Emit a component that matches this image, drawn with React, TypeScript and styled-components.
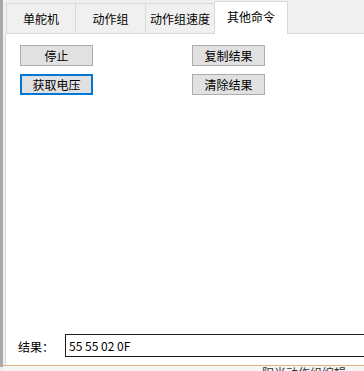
import styled, { createGlobalStyle } from "styled-components";

const GlobalStyle = createGlobalStyle`
  html, body {
    margin: 0;
    padding: 0;
    background: #f0f0f0;
  }
  body {
    font-family: "Noto Sans CJK SC", "Noto Sans", sans-serif;
    font-size: 12px;
    color: #000;
  }
`;

const tabs = [
  { name: "单舵机", width: 70 },
  { name: "动作组", width: 71 },
  { name: "动作组速度", width: 70 },
  { name: "其他命令", width: 74 },
];
const selectedTab = 3;

const App = () => {
  return (
    <>
      <GlobalStyle />
      <Page>
        <Edge />
        <Window>
          <TabBar>
            {tabs.map((t, i) => (
              <Tab
                key={t.name}
                $width={t.width}
                $active={i === selectedTab}
                $first={i === 0}
              >
                {t.name}
              </Tab>
            ))}
          </TabBar>
          <Panel>
            <ButtonGrid>
              <CmdButton>停止</CmdButton>
              <CmdButton>复制结果</CmdButton>
              <CmdButton $focused>获取电压</CmdButton>
              <CmdButton>清除结果</CmdButton>
            </ButtonGrid>
            <ResultRow>
              <ResultLabel>结果：</ResultLabel>
              <ResultBox readOnly value="55 55 02 0F" />
            </ResultRow>
          </Panel>
          <FrameLine />
          <BehindWindow>阳光动作组编辑</BehindWindow>
        </Window>
      </Page>
    </>
  );
};

export default App;

// styled-components
const Page = styled.div`
  display: flex;
  width: 364px;
  height: 371px;
  overflow: hidden;
`;

const Edge = styled.div`
  width: 3px;
  flex-shrink: 0;
  background: #a9a9a9;
  margin-bottom: 4px;
`;

const Window = styled.div`
  flex: 1;
  display: flex;
  flex-direction: column;
  min-width: 0;
  overflow: hidden;
`;

const TabBar = styled.div`
  height: 33px;
  display: flex;
  align-items: flex-end;
  padding-left: 3px;
  flex-shrink: 0;
`;

const Tab = styled.div<{ $width: number; $active?: boolean; $first?: boolean }>`
  box-sizing: border-box;
  display: flex;
  align-items: center;
  justify-content: center;
  width: ${(p) => p.$width}px;
  height: ${(p) => (p.$active ? "33px" : "30px")};
  margin-left: ${(p) => (p.$first ? "0" : "-1px")};
  margin-bottom: ${(p) => (p.$active ? "-1px" : "0")};
  padding-bottom: ${(p) => (p.$active ? "3px" : "0")};
  border: 1px solid #d9d9d9;
  border-bottom: none;
  background: ${(p) => (p.$active ? "#fff" : "#f0f0f0")};
  position: relative;
  z-index: ${(p) => (p.$active ? 1 : 0)};
  font-size: 12px;
  line-height: 1;
  white-space: nowrap;
`;

const Panel = styled.div`
  flex: 1;
  display: flex;
  flex-direction: column;
  background: #fff;
  border-top: 1px solid #d9d9d9;
  border-left: 1px solid #d9d9d9;
  margin-left: 2px;
  padding: 11px 0 8px 0;
`;

const ButtonGrid = styled.div`
  display: grid;
  grid-template-columns: 73px 73px;
  column-gap: 99px;
  row-gap: 8px;
  padding-left: 14px;
`;

const CmdButton = styled.button<{ $focused?: boolean }>`
  box-sizing: border-box;
  width: 73px;
  height: 21px;
  padding: 0;
  background: #e1e1e1;
  border: ${(p) => (p.$focused ? "2px solid #0078d7" : "1px solid #adadad")};
  font-family: "Noto Sans CJK SC", sans-serif;
  font-size: 12px;
  line-height: 1;
  color: #000;
`;

const ResultRow = styled.div`
  margin-top: auto;
  display: flex;
  align-items: center;
  padding-left: 12px;
`;

const ResultLabel = styled.span`
  width: 47px;
  font-size: 12px;
  margin-top: 1px;
`;

const ResultBox = styled.input`
  box-sizing: border-box;
  flex: 1;
  margin-right: -20px;
  height: 23px;
  padding: 0 0 0 3px;
  border: 1px solid #1c1c1c;
  background: #fff;
  font-family: "Noto Sans CJK SC", sans-serif;
  font-size: 12px;
  color: #000;
  outline: none;
`;

const FrameLine = styled.div`
  height: 1px;
  flex-shrink: 0;
  background: #e0b47c;
`;

const BehindWindow = styled.div`
  height: 5px;
  flex-shrink: 0;
  overflow: hidden;
  background: #f5f5f5;
  padding-left: 259px;
  font-size: 12px;
  line-height: 14px;
  color: #333;
  white-space: nowrap;
`;
